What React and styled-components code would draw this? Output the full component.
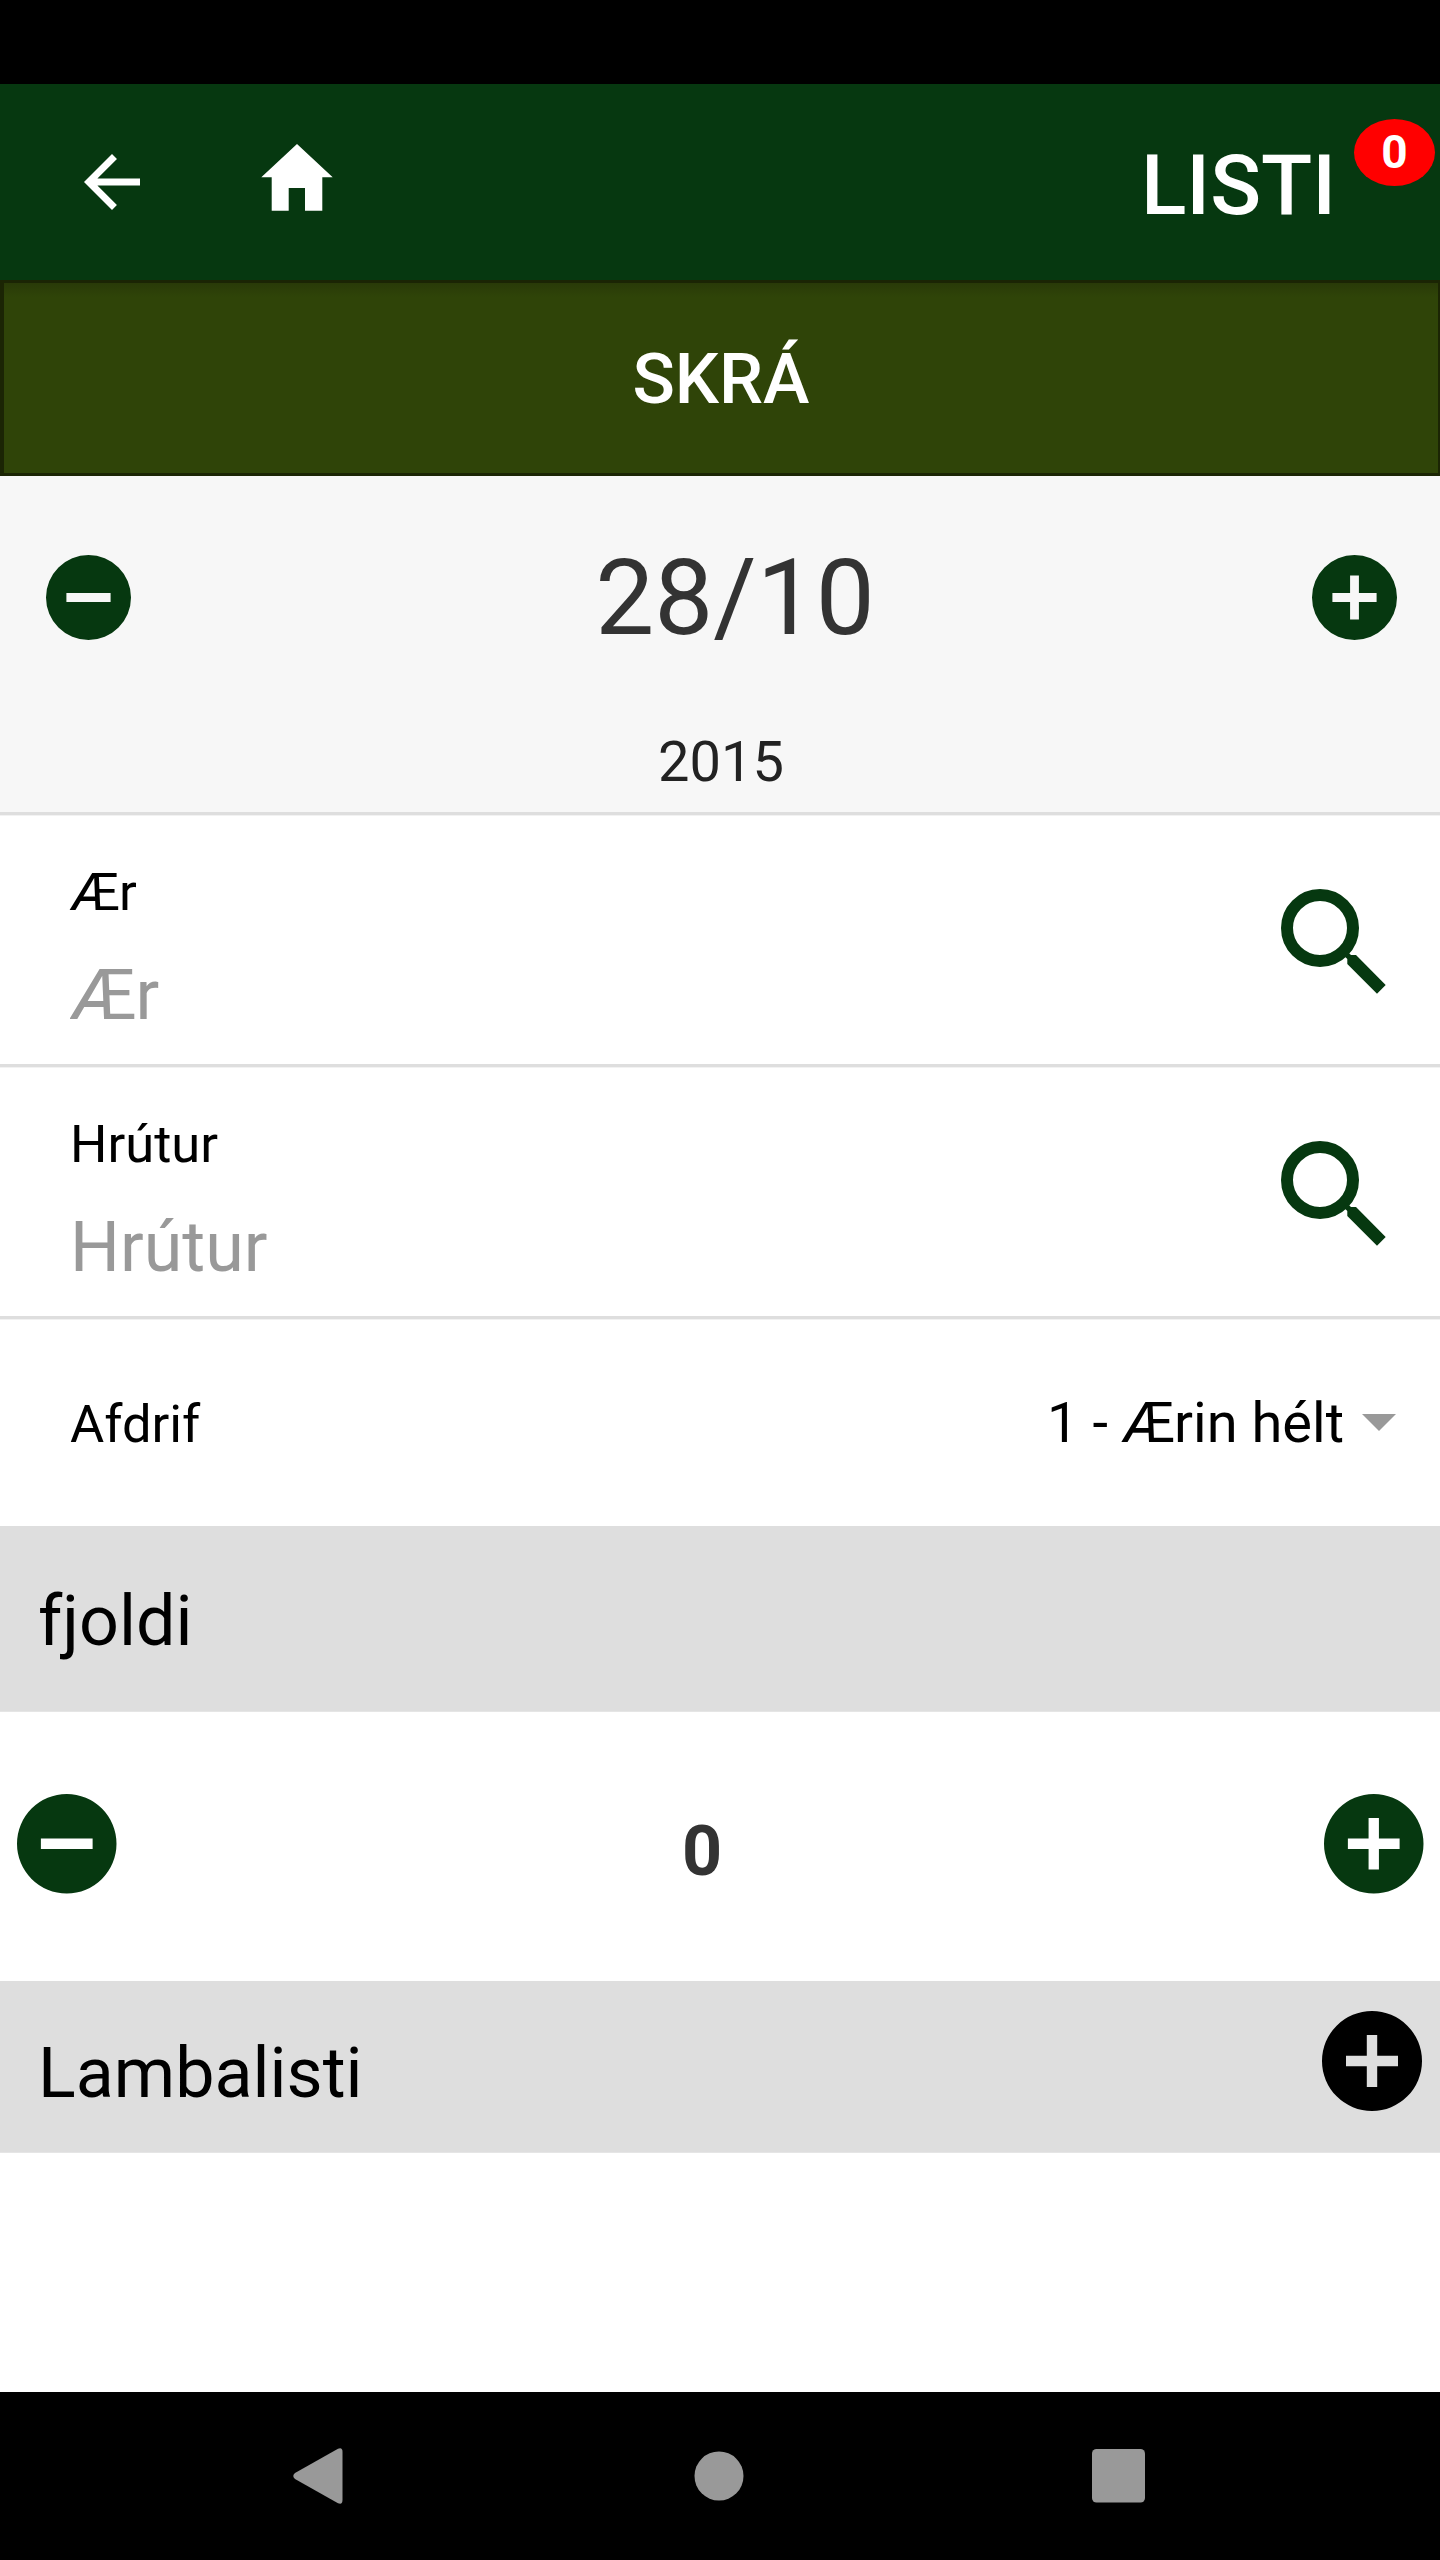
import React, { useState } from "react";
import styled, { createGlobalStyle } from "styled-components";

const GlobalStyle = createGlobalStyle`
  * {
    box-sizing: border-box;
  }

  body {
    margin: 0;
    background: #fff;
    font-family: Roboto, "Liberation Sans", sans-serif;
  }

  button {
    padding: 0;
    border: 0;
    background: none;
    font-family: inherit;
  }

  svg {
    display: block;
  }
`;

const Screen = styled.div`
  display: flex;
  flex-direction: column;
  width: 1440px;
  height: 2560px;
  overflow: hidden;
  background: #fff;
  color: #000;
`;

const StatusBar = styled.div`
  height: 84px;
  background: #000;
`;

const Header = styled.header`
  display: flex;
  height: 196px;
  background: #063810;
  color: #fff;
`;

const BackButton = styled.button`
  margin: 56px 0 0 70px;
  align-self: flex-start;
`;

const HomeButton = styled.button`
  margin: 60px 0 0 107px;
  align-self: flex-start;
`;

const ListButton = styled.button`
  position: relative;
  margin-left: auto;
  padding: 8px 104px 0 0;
  color: #fff;
  font-size: 84px;
  font-weight: 500;
  line-height: 188px;
`;

const Badge = styled.span`
  position: absolute;
  top: 35px;
  right: 5px;
  width: 81px;
  height: 67px;
  border-radius: 50%;
  background: #f00;
  font-size: 46px;
  font-weight: 700;
  line-height: 66px;
  text-align: center;
`;

const SaveButton = styled.button`
  height: 196px;
  flex: none;
  padding-top: 2px;
  border: solid #1b2504;
  border-width: 3px 2px 3px 4px;
  background: linear-gradient(#293a08, #2f4408 14px);
  color: #fff;
  font-size: 70px;
  font-weight: 500;
  line-height: 188px;
`;

const DatePanel = styled.section`
  height: 336px;
  background: #f7f7f7;
`;

const DateRow = styled.div`
  display: flex;
  align-items: center;
  justify-content: space-between;
  height: 243px;
  padding: 0 43.5px 0 45.5px;
`;

const DayMonth = styled.span`
  padding: 2px 0 0 28px;
  color: #333;
  font-size: 105px;
  line-height: 120px;
`;

const Year = styled.div`
  padding-left: 2px;
  color: #222;
  font-size: 56px;
  line-height: 86px;
  text-align: center;
`;

const Row = styled.div`
  display: flex;
  justify-content: space-between;
  height: ${({ $height }) => $height}px;
  padding: 0 44px 0 70px;
  border-top: 3px solid #dedede;
  box-shadow: inset 0 1px #f2f2f2;
`;

const FieldText = styled.label`
  display: flex;
  flex-direction: column;
  gap: 23px;
  padding-top: 37px;
`;

const Label = styled.span`
  font-size: 52.5px;
  line-height: 80px;
`;

const Input = styled.input`
  width: 900px;
  height: 80px;
  padding: 0;
  border: 0;
  outline: 0;
  background: none;
  font-family: inherit;
  font-size: 70px;
  line-height: 80px;

  &::placeholder {
    color: #999;
    opacity: 1;
  }
`;

const SearchButton = styled.button`
  align-self: flex-start;
  margin: 74px 10px 0 0;
`;

const OutcomeRow = styled(Row)`
  align-items: center;

  ${Label} {
    padding-top: 2px;
  }
`;

const Select = styled.div`
  display: flex;
  align-items: center;
  gap: 18px;
  font-size: 56px;
  line-height: 80px;
`;

const Divider = styled.div`
  display: flex;
  justify-content: space-between;
  height: ${({ $height }) => $height}px;
  padding: ${({ $top }) => $top}px 18px 0 38px;
  border-bottom: 1px solid #e5e5e5;
  background: #dedede;
  font-size: 70px;
  line-height: 90px;
`;

const AddLamb = styled.button`
  align-self: flex-start;
  margin-top: -17px;
`;

const Counter = styled.div`
  display: flex;
  align-items: center;
  justify-content: space-between;
  height: 269px;
  padding: 0 16px 5px 17px;
`;

const Count = styled.span`
  padding: 14px 37px 0 0;
  color: #333;
  font-size: 70px;
  font-weight: 700;
  line-height: 80px;
`;

const NavBar = styled.nav`
  display: flex;
  align-items: center;
  height: 168px;
  margin-top: auto;
  padding-left: 293px;
  background: #000;
  fill: #999;
`;

const BackKey = styled.svg`
  margin-right: 351px;
`;

const HomeKey = styled.svg`
  margin-right: 347.5px;
`;

const BackIcon = () => (
  <svg width="84" height="84" viewBox="0 0 24 24" fill="#fff">
    <path d="M20 11H7.83l5.59-5.59L12 4l-8 8 8 8 1.41-1.41L7.83 13H20z" />
  </svg>
);

const HomeIcon = () => (
  <svg width="72" height="67" viewBox="0 0 72 67" fill="#fff">
    <path d="M36 0 71.7 33.3H61.3V66.7H44V44H27.7V66.7H10.7V33.3H.3z" />
  </svg>
);

const RoundIcon = ({ size, plus, color = "#063810" }) => (
  <svg width={size} height={size} viewBox="0 0 100 100" fill={color}>
    <path
      fillRule="evenodd"
      d={
        "M50 0a50 50 0 1 0 0 100a50 50 0 1 0 0-100z" +
        (plus
          ? "M44.8 24H55.2V44.8H76V55.2H55.2V76H44.8V55.2H24V44.8H44.8z"
          : "M24 44.8H76V55.2H24z")
      }
    />
  </svg>
);

const SearchIcon = () => (
  <svg width="105" height="105" viewBox="0 0 105 105" fill="#063810">
    <circle cx="39" cy="39" r="33" fill="none" stroke="#063810" strokeWidth="12" />
    <path d="M66 62.5 68.7 64.7 70 66H75L104.7 96 96 104.7 66.3 75V70L65 68.7 62 66z" />
  </svg>
);

const SearchField = ({ label }) => {
  const [value, setValue] = useState("");

  return (
    <Row $height={252}>
      <FieldText>
        <Label>{label}</Label>
        <Input
          placeholder={label}
          value={value}
          onChange={(e) => setValue(e.target.value)}
        />
      </FieldText>
      <SearchButton>
        <SearchIcon />
      </SearchButton>
    </Row>
  );
};

const App = () => {
  const [count, setCount] = useState(0);

  return (
    <Screen>
      <GlobalStyle />
      <StatusBar />
      <Header>
        <BackButton>
          <BackIcon />
        </BackButton>
        <HomeButton>
          <HomeIcon />
        </HomeButton>
        <ListButton>
          LISTI
          <Badge>0</Badge>
        </ListButton>
      </Header>
      <SaveButton>SKRÁ</SaveButton>

      <DatePanel>
        <DateRow>
          <button>
            <RoundIcon size={85} />
          </button>
          <DayMonth>28/10</DayMonth>
          <button>
            <RoundIcon size={85} plus />
          </button>
        </DateRow>
        <Year>2015</Year>
      </DatePanel>

      <SearchField label="Ær" />
      <SearchField label="Hrútur" />
      <OutcomeRow $height={210}>
        <Label>Afdrif</Label>
        <Select>
          1 - Ærin hélt
          <svg width="34" height="17" viewBox="0 0 34 17" fill="#999">
            <path d="M0 0H34L17 17z" />
          </svg>
        </Select>
      </OutcomeRow>

      <Divider $height={186} $top={50}>
        fjoldi
      </Divider>
      <Counter>
        <button onClick={() => setCount(Math.max(0, count - 1))}>
          <RoundIcon size={99.5} />
        </button>
        <Count>{count}</Count>
        <button onClick={() => setCount(count + 1)}>
          <RoundIcon size={99.5} plus />
        </button>
      </Counter>
      <Divider $height={172} $top={47}>
        Lambalisti
        <AddLamb>
          <RoundIcon size={100} plus color="#000" />
        </AddLamb>
      </Divider>

      <NavBar>
        <BackKey width="50" height="56" viewBox="0 0 50 56">
          <path d="M2 25 45 .8Q49.5-1 49.5 4V52Q49.5 57 45 55.2L2 31Q-1.5 28 2 25z" />
        </BackKey>
        <HomeKey width="50" height="50" viewBox="0 0 50 50">
          <circle cx="25" cy="25" r="24.5" />
        </HomeKey>
        <svg width="53" height="54" viewBox="0 0 53 54">
          <rect width="53" height="53.5" rx="4.5" />
        </svg>
      </NavBar>
    </Screen>
  );
};

export default App;
